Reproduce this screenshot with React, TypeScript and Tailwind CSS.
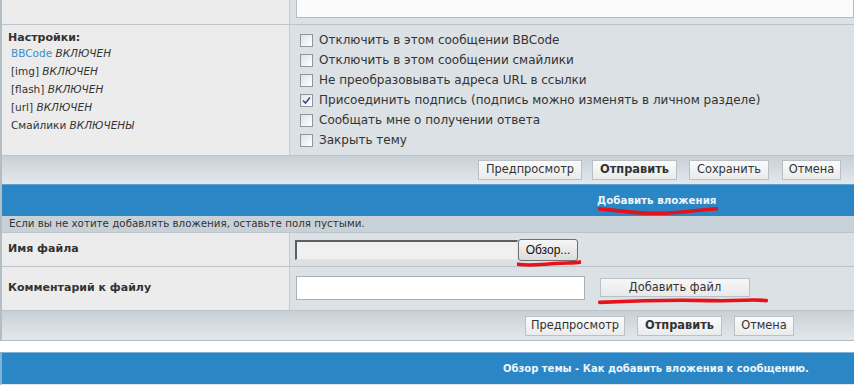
import React from 'react';

const font = { fontFamily: '"DejaVu Sans", Verdana, sans-serif' };

function Btn({ label, bold, w }: { label: string; bold?: boolean; w: string }) {
  return (
    <div
      className={`${w} h-[20px] flex items-center justify-center border border-[#b9c0c6] bg-gradient-to-b from-[#fbfbfb] to-[#e9ebed] text-[11.4px] text-[#333] ${bold ? 'font-bold' : ''}`}
    >
      {label}
    </div>
  );
}

function Check({ checked, label }: { checked?: boolean; label: string }) {
  return (
    <div className="h-[20px] flex items-center gap-[6px]">
      <div className="w-[13px] h-[13px] border border-[#8e979e] bg-gradient-to-br from-[#dfe3e6] to-[#ffffff] flex items-center justify-center">
        {checked && (
          <svg width="9" height="9" viewBox="0 0 9 9">
            <path d="M1 4.5 L3.5 7 L8 1.5" stroke="#3a4a8c" strokeWidth="1.6" fill="none" />
          </svg>
        )}
      </div>
      <span className="text-[12px] text-[#333]">{label}</span>
    </div>
  );
}

function RedLine({ d, className }: { d: string; className: string }) {
  return (
    <svg className={`absolute pointer-events-none ${className}`} viewBox="0 0 100 10" preserveAspectRatio="none">
      <path d={d} stroke="#e8101a" strokeWidth="3.6" fill="none" strokeLinecap="round" vectorEffect="non-scaling-stroke" />
    </svg>
  );
}

export default function App() {
  return (
    <div className="w-[854px] h-[386px] bg-white overflow-hidden relative" style={font}>
      <div className="border-l-2 border-[#b3bdc4] border-b border-b-[#b3bdc4]">
        {/* top row with textarea end */}
        <div className="grid grid-cols-[288px_1fr] h-[25px] border-b border-[#bcc4ca]">
          <div className="bg-[#ececec] border-r border-[#c6cdd2]"></div>
          <div className="bg-[#dce1e5] pl-[6px]">
            <div className="h-[18px] bg-[#fbfbfb] border border-t-0 border-[#b5bcc2]"></div>
          </div>
        </div>

        {/* options */}
        <div className="grid grid-cols-[288px_1fr] h-[131px] border-b border-[#bcc4ca]">
          <div className="bg-[#ececec] border-r border-[#c6cdd2] pl-[6px] pt-[6px]">
            <div className="text-[11px] font-bold text-[#333] leading-[14px]">Настройки:</div>
            <div className="pl-[3px] text-[10.5px] text-[#333]">
              <div className="h-[18px] flex items-center">
                <span className="text-[#3a8ec6]">BBCode</span>&nbsp;<i>ВКЛЮЧЕН</i>
              </div>
              <div className="h-[18px] flex items-center">
                [img]&nbsp;<i>ВКЛЮЧЕН</i>
              </div>
              <div className="h-[18px] flex items-center">
                [flash]&nbsp;<i>ВКЛЮЧЕН</i>
              </div>
              <div className="h-[18px] flex items-center">
                [url]&nbsp;<i>ВКЛЮЧЕН</i>
              </div>
              <div className="h-[18px] flex items-center">
                Смайлики&nbsp;<i>ВКЛЮЧЕНЫ</i>
              </div>
            </div>
          </div>
          <div className="bg-[#dce1e5] pl-[10px] pt-[5px]">
            <Check label="Отключить в этом сообщении BBCode" />
            <Check label="Отключить в этом сообщении смайлики" />
            <Check label="Не преобразовывать адреса URL в ссылки" />
            <Check checked label="Присоединить подпись (подпись можно изменять в личном разделе)" />
            <Check label="Сообщать мне о получении ответа" />
            <Check label="Закрыть тему" />
          </div>
        </div>

        {/* buttons bar */}
        <div className="h-[28px] bg-gradient-to-b from-[#c8d0d7] to-[#e4e8eb] flex items-center justify-end pr-[13px]">
          <Btn label="Предпросмотр" w="w-[104px]" />
          <div className="w-[10px]" />
          <Btn label="Отправить" bold w="w-[85px]" />
          <div className="w-[12px]" />
          <Btn label="Сохранить" w="w-[80px]" />
          <div className="w-[13px]" />
          <Btn label="Отмена" w="w-[59px]" />
        </div>

        {/* attachments header */}
        <div className="h-[32px] bg-[#2a86c5] border-t border-[#5aa3d6] flex items-center pl-[595px] relative">
          <span className="text-[10.3px] font-bold text-[#eef5fb]">Добавить вложения</span>
          <RedLine d="M1 3 C 20 6, 35 9, 55 8 S 85 4, 99 3" className="left-[596px] top-[21px] w-[120px] h-[9px]" />
        </div>

        <div className="h-[17px] bg-[#c9d1d8] flex items-center pl-[7px] border-b border-[#bcc4ca]">
          <span className="text-[10.3px] text-[#333]">Если вы не хотите добавлять вложения, оставьте поля пустыми.</span>
        </div>

        {/* file name */}
        <div className="grid grid-cols-[288px_1fr] h-[34px] border-b border-[#bcc4ca]">
          <div className="bg-[#ececec] border-r border-[#c6cdd2] pl-[6px] flex items-center">
            <span className="text-[11px] font-bold text-[#333]">Имя файла</span>
          </div>
          <div className="bg-[#dce1e5] pl-[5px] flex items-center relative">
            <div className="w-[223px] h-[20px] bg-[#f0f0f0] border-t-2 border-l-2 border-[#5f5f5f] border-r border-b border-r-[#e4e4e4] border-b-[#e4e4e4]"></div>
            <div
              className="w-[60px] h-[22px] rounded-[3px] border border-[#707070] bg-gradient-to-b from-[#f6f6f6] to-[#dcdcdc] flex items-center justify-center text-[12px] text-[#111]"
              style={{ fontFamily: '"Liberation Sans", Arial, sans-serif' }}
            >
              Обзор...
            </div>
            <RedLine d="M1 6 C 20 9, 40 6, 60 5 S 90 4, 99 3" className="left-[227px] top-[27px] w-[64px] h-[7px]" />
          </div>
        </div>

        {/* comment */}
        <div className="grid grid-cols-[288px_1fr] h-[44px] border-b border-[#bcc4ca]">
          <div className="bg-[#ececec] border-r border-[#c6cdd2] pl-[6px] flex items-center">
            <span className="text-[11px] font-bold text-[#333]">Комментарий к файлу</span>
          </div>
          <div className="bg-[#dce1e5] pl-[6px] pt-[9px] flex items-start gap-[15px] relative">
            <div className="w-[289px] h-[24px] bg-white border border-[#a9b1b7]"></div>
            <div className="mt-[2px] w-[150px] h-[19px] border border-[#b9c0c6] bg-gradient-to-b from-[#f7f7f7] to-[#e7e9eb] flex items-center justify-center text-[11.4px] text-[#333]">
              Добавить файл
            </div>
            <RedLine d="M1 6 C 25 4, 45 3, 65 4 S 90 2, 99 4" className="left-[308px] top-[30px] w-[170px] h-[9px]" />
          </div>
        </div>

        {/* buttons bar 2 */}
        <div className="h-[29px] bg-gradient-to-b from-[#c8d0d7] to-[#e4e8eb] flex items-center justify-end gap-[12px] pr-[60px]">
          <Btn label="Предпросмотр" w="w-[100px]" />
          <Btn label="Отправить" bold w="w-[85px]" />
          <Btn label="Отмена" w="w-[60px]" />
        </div>
      </div>

      <div className="h-[11px]"></div>

      <div className="h-[33px] bg-[#2a86c5] border-t border-l-2 border-[#7fb3d9] border-b border-b-[#dfe6ec] flex items-center pl-[501px]">
        <span className="text-[10px] font-bold text-[#eef5fb]">Обзор темы - Как добавить вложения к сообщению.</span>
      </div>
    </div>
  );
}
